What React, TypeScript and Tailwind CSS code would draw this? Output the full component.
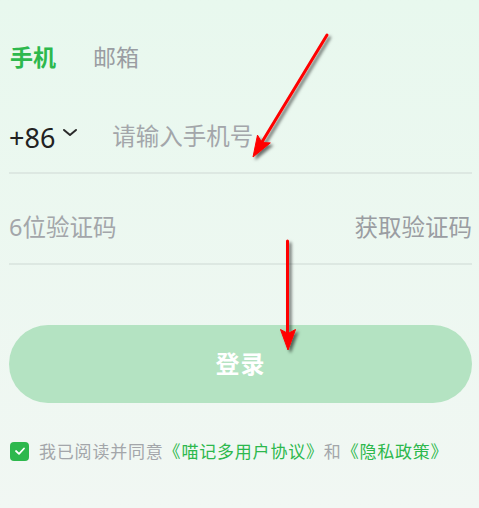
const FONT = { fontFamily: '"Noto Sans", "Noto Sans CJK SC", sans-serif' };

function ChevronDown() {
  return (
    <svg width="16" height="9" viewBox="0 0 16 9" className="ml-[7px] mt-[-10px]">
      <path d="M2 2 L8 7 L14 2" fill="none" stroke="#2a2a2a" strokeWidth="2" strokeLinecap="round" strokeLinejoin="round" />
    </svg>
  );
}

function Arrows() {
  return (
    <svg
      width="479"
      height="508"
      viewBox="0 0 479 508"
      className="absolute left-0 top-0 pointer-events-none"
    >
      <defs>
        <filter id="shadow" x="-50%" y="-50%" width="200%" height="200%">
          <feDropShadow dx="2.5" dy="2.5" stdDeviation="1.6" floodColor="#000" floodOpacity="0.55" />
        </filter>
      </defs>
      <g filter="url(#shadow)" fill="#ff0000" stroke="#ff0000">
        <line x1="327" y1="35" x2="262" y2="142" strokeWidth="3" strokeLinecap="round" />
        <polygon points="253,157 257.5,135.1 261.8,142.5 270.3,142.9" strokeWidth="1" strokeLinejoin="round" />
        <line x1="287.5" y1="241" x2="287.5" y2="333" strokeWidth="3" strokeLinecap="round" />
        <polygon points="288,350 280.5,329.5 288,333.5 295.5,329.5" strokeWidth="1" strokeLinejoin="round" />
      </g>
    </svg>
  );
}

export default function App() {
  return (
    <div
      className="relative w-[479px] h-[508px] overflow-hidden bg-gradient-to-b from-[#e8f8ee] to-[#f1f7f3]"
      style={FONT}
    >
      <div className="flex flex-col pl-[9px] pr-[7px]">
        {/* tabs */}
        <div className="mt-[37px] h-[40px] flex items-center gap-[37px] pl-[1px]">
          <span className="text-[23px] font-bold text-[#2db84d] leading-none">手机</span>
          <span className="text-[23px] text-[#9a9da2] leading-none">邮箱</span>
        </div>

        {/* phone */}
        <div className="mt-[25px] h-[72px] flex items-center border-b-2 border-[#dde8e2]">
          <div className="flex items-center">
            <span className="text-[27px] text-[#222] leading-none">+86</span>
            <ChevronDown />
          </div>
          <span className="ml-[34px] text-[23.5px] text-[#a3a6aa] leading-none">请输入手机号</span>
        </div>

        {/* code */}
        <div className="mt-[19px] h-[72px] flex items-center justify-between border-b-2 border-[#dde8e2]">
          <span className="text-[23.5px] text-[#a3a6aa] leading-none">6位验证码</span>
          <span className="text-[23.5px] text-[#9a9da2] leading-none">获取验证码</span>
        </div>

        {/* login button */}
        <button className="mt-[60px] h-[78px] w-full rounded-full bg-[#b4e3c2] flex items-center justify-center">
          <span className="text-[24px] font-bold text-white leading-none tracking-[1px]">登录</span>
        </button>

        {/* agreement */}
        <div className="mt-[36px] h-[24px] flex items-center pl-[1px]">
          <div className="w-[19px] h-[19px] rounded-[4px] bg-[#2db84d] flex items-center justify-center">
            <svg width="12" height="10" viewBox="0 0 12 10">
              <path d="M2 5 L5 7.8 L10 2.5" fill="none" stroke="#fff" strokeWidth="1.8" strokeLinecap="round" strokeLinejoin="round" />
            </svg>
          </div>
          <p className="ml-[10px] text-[17px] leading-none text-[#a3a6aa] whitespace-nowrap tracking-[0.8px]">
            我已阅读并同意
            <span className="text-[#2db84d]">《喵记多用户协议》</span>
            和
            <span className="text-[#2db84d]">《隐私政策》</span>
          </p>
        </div>
      </div>

      <Arrows />
    </div>
  );
}
